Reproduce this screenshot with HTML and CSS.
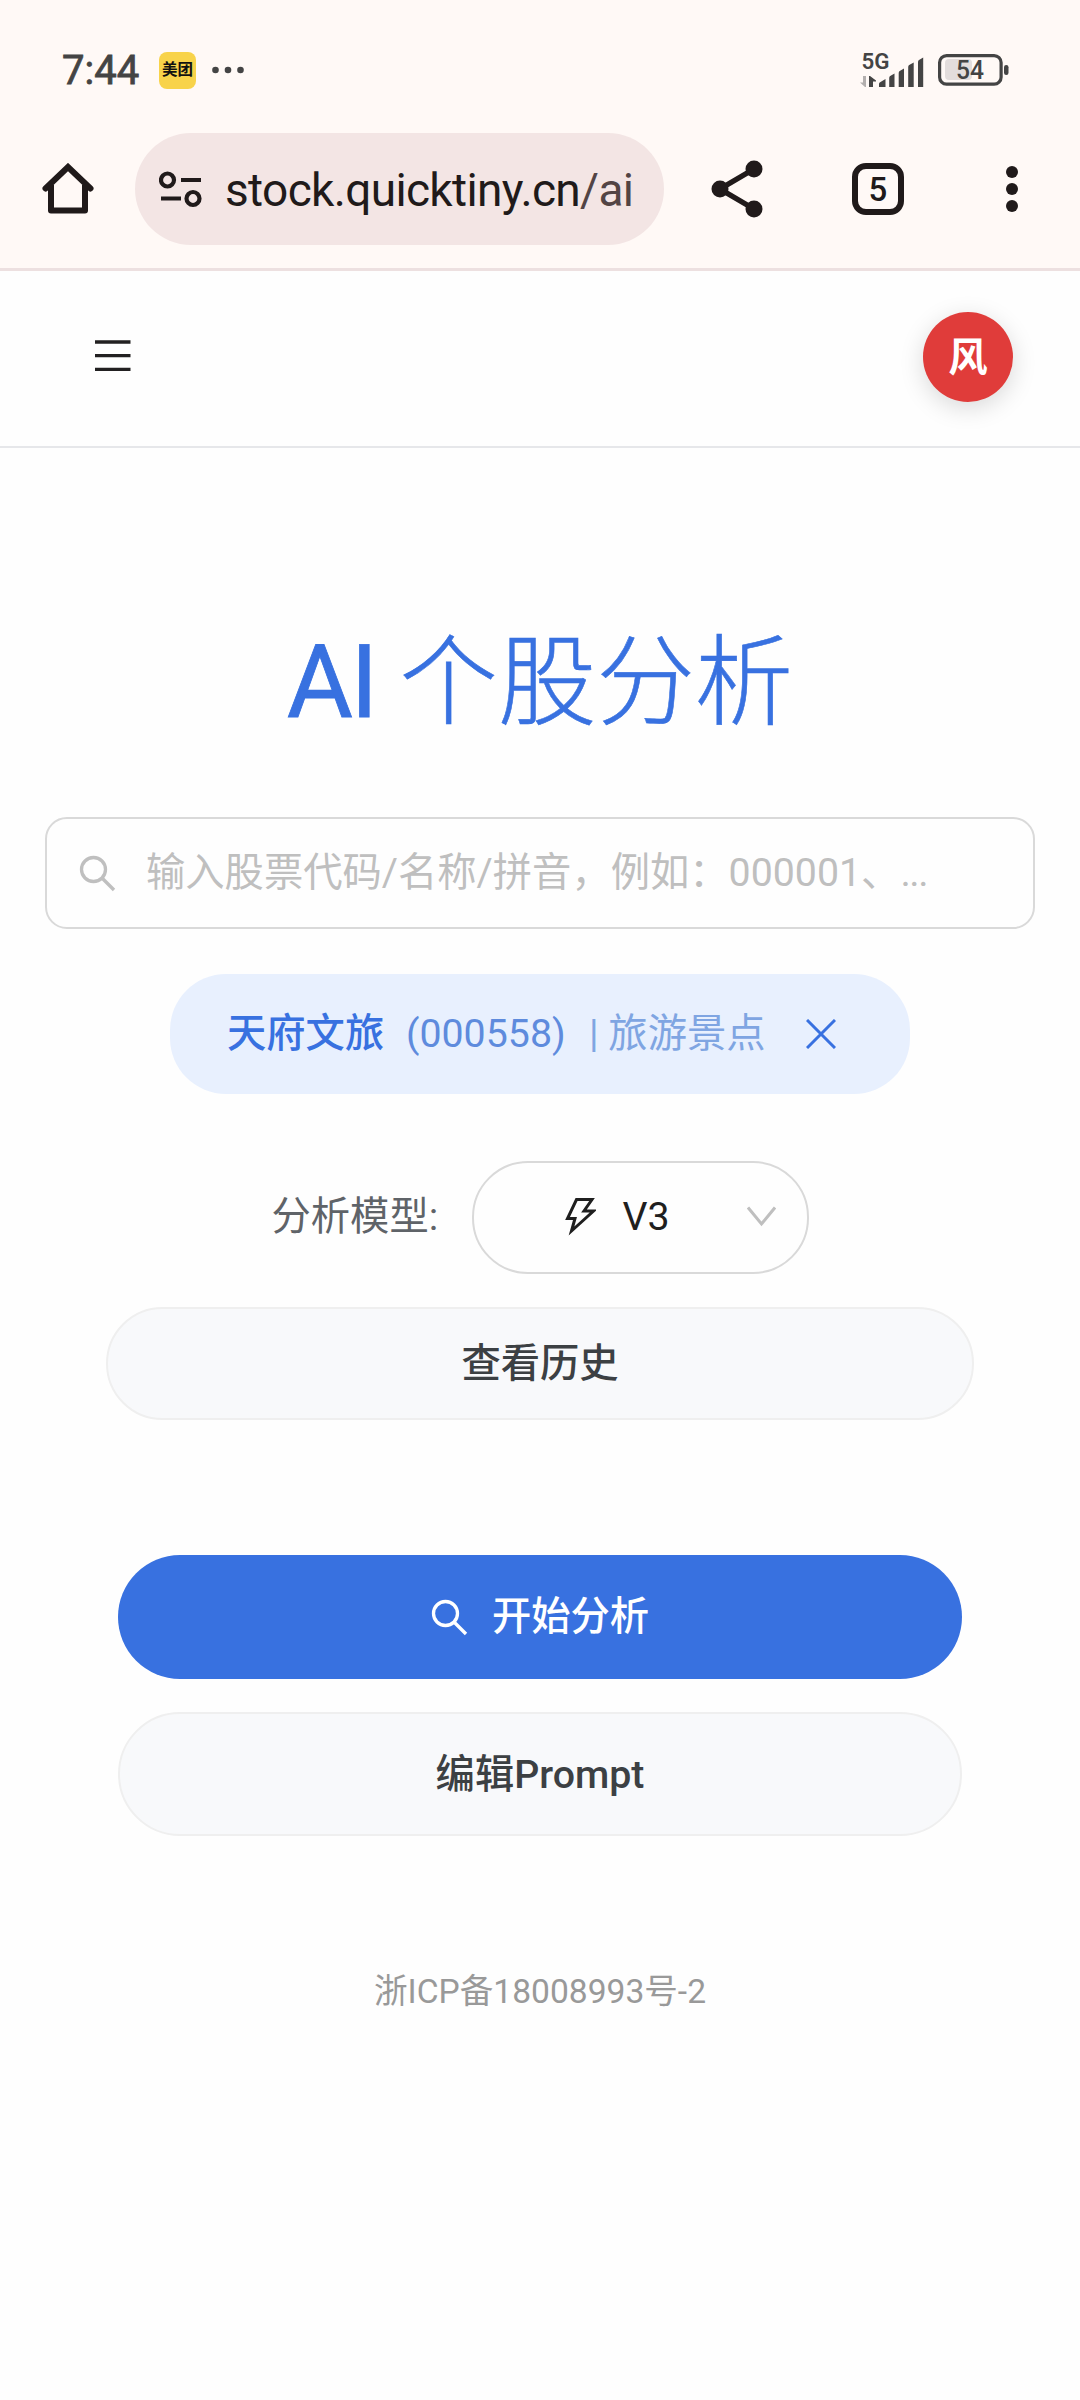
FILE: index.html
```html
<!DOCTYPE html>
<html lang="zh-CN">
<head>
<meta charset="utf-8">
<title>AI 个股分析</title>
<link rel="stylesheet" href="styles.css">
</head>
<body>
<div class="browser">
  <div class="status">
    <span class="time">7:44</span>
    <span class="badge">美团</span>
    <svg class="more" width="34" height="8" viewBox="0 0 34 8" fill="#444"><circle cx="4.500" cy="4" r="3.300"/><circle cx="17" cy="4" r="3.300"/><circle cx="29.500" cy="4" r="3.300"/></svg>
    <svg class="signal" width="64" height="44" viewBox="0 -4 64 44" fill="#444">
      <text x="1.500" y="17" font-size="22" class="net" textLength="28" lengthAdjust="spacingAndGlyphs">5G</text>
      <path fill="#b3afae" d="M6 24v11h-1L0 30.500h3V24z"/>
      <path d="M9 35V24h1l6 4.500v1h-3V35z"/>
      <path d="M19 35v-3q0-1.500 1.500-2L25.500 27V35zM29.200 35V26q0-1.500 1-2l4.300-2.500V35zM38.700 35V21q0-1.500 1-2l4.300-2.500V35zM48.200 35V15q0-1.500 1-2l4.500-2.500V35zM58 35V10q0-1.500 1-2l4.200-2.500V35z"/>
    </svg>
    <svg class="battery" width="72" height="32" viewBox="0 0 72 32">
      <rect x="7" y="5" width="27" height="21" rx="4" fill="#e3dddc"/>
      <rect x="1.600" y="1.600" width="61.500" height="28.600" rx="7" fill="none" stroke="#444" stroke-width="3.200"/>
      <rect x="66" y="11" width="4.500" height="10" rx="2.200" fill="#444"/>
      <text x="18" y="25.200" font-size="25.500" class="pct" textLength="28" lengthAdjust="spacingAndGlyphs">54</text>
    </svg>
  </div>
  <div class="toolbar">
    <svg class="home" width="52" height="52" viewBox="0 0 52 52" fill="none" stroke="#201a1a" stroke-width="6" stroke-linejoin="round" stroke-linecap="round"><path stroke-linejoin="miter" d="M3.500 25.500L26 4 48.500 25.500"/><path stroke-linecap="butt" d="M9 22V47.500H43V22"/></svg>
    <div class="omnibox">
      <svg width="43" height="37" viewBox="0 0 43 37" fill="none" stroke="#201a1a" stroke-width="4.200"><circle cx="8.500" cy="9" r="6.500"/><path d="M22 9h20M2 27.500h20"/><circle cx="34" cy="27.500" r="6.500"/></svg>
      <span class="url">stock.quicktiny.cn<span class="path">/ai</span></span>
    </div>
    <svg class="share" width="52" height="58" viewBox="0 0 52 58" fill="#201a1a"><path d="M43 9L9 29 43 49" fill="none" stroke="#201a1a" stroke-width="5.500"/><circle cx="43" cy="9" r="8.500"/><circle cx="9" cy="29" r="8.500"/><circle cx="43" cy="49" r="8.500"/></svg>
    <span class="tabs">5</span>
    <svg class="kebab" width="12" height="48" viewBox="0 0 12 48" fill="#201a1a"><circle cx="6" cy="7" r="6"/><circle cx="6" cy="24" r="6"/><circle cx="6" cy="41" r="6"/></svg>
  </div>
</div>
<header class="header">
  <svg width="36" height="34" viewBox="0 0 36 34" stroke="#222021" stroke-width="3.300"><path d="M0 2h35.500M0 15.700h35.500M0 29.300h35.500"/></svg>
  <span class="avatar">风</span>
</header>
<main class="main">
  <h1 class="title"><span class="latin">AI</span> 个股分析</h1>
  <div class="search">
    <svg width="37" height="37" viewBox="0 0 37 37" fill="none" stroke="#bfbfbf" stroke-width="3.300"><circle cx="14.500" cy="14.500" r="12"/><path d="M23 23L35 35"/></svg>
    <span class="placeholder">输入股票代码/名称/拼音，例如：<span class="num">000001</span>、<span class="dots">...</span></span>
  </div>
  <div class="chip">
    <span class="name">天府文旅</span>
    <span class="code">(000558)</span>
    <span class="industry">| 旅游景点</span>
    <svg width="30" height="30" viewBox="0 0 30 30" stroke="#3871e0" stroke-width="3"><path d="M1 1L29 29M29 1L1 29"/></svg>
  </div>
  <div class="model">
    <span class="label">分析模型:</span>
    <div class="select">
      <svg class="bolt" width="31" height="38" viewBox="0 0 31 38" fill="none" stroke="#1f1f1f" stroke-width="3"><path d="M11.500 1.500H27L19 13H28.500L6.500 33L10 20.500H2.500Z"/></svg>
      <span class="version">V3</span>
      <svg class="chevron" width="29" height="21" viewBox="0 0 29 21" fill="none" stroke="#bfbfbf" stroke-width="3"><path d="M1 1.500L14.500 18 28 1.500"/></svg>
    </div>
  </div>
  <div class="button history">查看历史</div>
  <div class="button start">
    <svg width="37" height="37" viewBox="0 0 37 37" fill="none" stroke="#fff" stroke-width="3.300"><circle cx="14.500" cy="14.500" r="12"/><path d="M23 23L35 35"/></svg>
    <span>开始分析</span>
  </div>
  <div class="button prompt">编辑Prompt</div>
</main>
<footer class="footer">浙ICP备18008993号-2</footer>
</body>
</html>
```
FILE: styles.css
```css
* { box-sizing: border-box; }
body {
  margin: 0;
  width: 1080px;
  height: 2400px;
  overflow: hidden;
  background: #fefefe;
  font-family: Roboto, "Noto Sans CJK SC", sans-serif;
  font-size: 39.300px;
  line-height: 60px;
  white-space: nowrap;
}
svg { display: block; flex: none; }
.browser {
  height: 271px;
  background: #fff9f6;
  border-bottom: 3px solid #ede0e0;
}
.status {
  display: flex;
  align-items: center;
  height: 133px;
  padding: 7px 70px 0 62px;
}
.time { font-size: 40px; -webkit-text-stroke: .8px #444; color: #444; width: 97px; padding-top: 1px; }
.badge {
  width: 37px;
  height: 37px;
  border-radius: 8px;
  background: #f8d34a;
  color: #111;
  font-size: 15.500px;
  font-weight: 700;
  line-height: 36px;
  text-align: center;
}
.more { margin-left: 15px; }
.signal { margin-left: auto; }
.battery { margin-left: 14px; }
.net { font-weight: 600; }
.pct { font-weight: 500; fill: #444; }
.toolbar {
  display: flex;
  align-items: center;
  height: 112px;
  padding-left: 42px;
}
.omnibox {
  display: flex;
  align-items: center;
  width: 529px;
  height: 112px;
  margin-left: 41px;
  padding-left: 24px;
  border-radius: 56px;
  background: #f3e5e4;
}
.url { margin-left: 23px; padding-top: 1px; font-size: 46px; letter-spacing: -.650px; color: #201a1a; }
.path { color: #524444; }
.share { margin-left: 47px; }
.tabs {
  width: 52px;
  height: 52px;
  margin-left: 89px;
  border: 6px solid #201a1a;
  border-radius: 14px;
  font-size: 33px;
  font-weight: 500;
  line-height: 42px;
  text-align: center;
  color: #201a1a;
}
.kebab { margin-left: 102px; }
.header {
  display: flex;
  align-items: center;
  justify-content: space-between;
  height: 177px;
  padding: 0 67px 3px 95px;
  border-bottom: 2px solid #e6e7ea;
}
.avatar {
  width: 90px;
  height: 90px;
  border-radius: 50%;
  background: #e03c3a;
  box-shadow: 0 6px 24px rgba(0, 0, 0, .15);
  color: #fff;
  font-weight: 600;
  line-height: 92px;
  text-align: center;
}
.main {
  display: flex;
  flex-direction: column;
  align-items: center;
}
.title {
  margin: 160px 0 0;
  height: 150px;
  font-size: 98.400px;
  font-weight: 300;
  line-height: 150px;
  color: #3871e0;
  -webkit-text-stroke: .6px #3871e0;
}
.latin { font-size: 101.500px; font-weight: 400; letter-spacing: -2.500px; -webkit-text-stroke: .8px #3871e0; }
.search {
  display: flex;
  align-items: center;
  width: 990px;
  height: 112px;
  margin-top: 59px;
  padding-left: 32px;
  border: 2px solid #d9d9d9;
  border-radius: 22px;
  color: #bfbfbf;
}
.placeholder { margin-left: 30px; }
.dots { letter-spacing: -1.500px; }
.chip {
  display: flex;
  align-items: center;
  width: 740px;
  height: 120px;
  margin-top: 45px;
  padding-left: 57px;
  border-radius: 56px;
  background: #e8f0fe;
}
.name { width: 179px; font-weight: 500; color: #3871e0; }
.code { width: 183px; color: #5e8bdd; }
.industry { width: 217px; color: #7fa5e2; }
.model {
  display: flex;
  align-items: center;
  height: 113px;
  margin-top: 67px;
}
.label { width: 200px; color: #5f6368; margin-top: -2px; }
.select {
  display: flex;
  align-items: center;
  width: 337px;
  height: 113px;
  padding: 0 0 2px 91px;
  border: 2px solid #d9d9d9;
  border-radius: 56px;
  color: #1f1f1f;
}
.version { margin-left: 27px; }
.chevron { margin-left: auto; margin-right: 31px; }
.button {
  display: flex;
  align-items: center;
  justify-content: center;
  width: 844px;
  height: 124px;
  border: 2px solid #efefef;
  border-radius: 62px;
  background: #f8f9fb;
  color: #3c4043;
  font-weight: 500;
}
.history { width: 868px; height: 113px; margin-top: 33px; }
.start {
  gap: 24px;
  margin-top: 135px;
  border: 0;
  background: #3871e0;
  color: #fff;
}
.prompt { margin-top: 33px; padding-top: 2px; }
.footer {
  margin-top: 126px;
  font-size: 33.600px;
  text-align: center;
  color: #999;
}
```
